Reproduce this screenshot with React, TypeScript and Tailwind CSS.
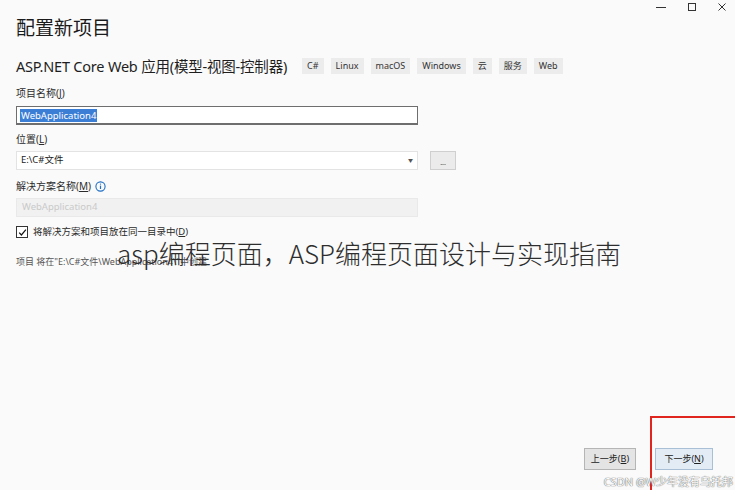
const tags = ["C#", "Linux", "macOS", "Windows", "云", "服务", "Web"];

function WindowControls() {
  return (
    <div className="absolute right-0 top-0 flex items-center gap-[20px] pr-[8px] pt-[2px] text-[#333]">
      <svg width="12" height="10" viewBox="0 0 12 10">
        <line x1="1" y1="5.5" x2="11" y2="5.5" stroke="currentColor" strokeWidth="1" />
      </svg>
      <svg width="10" height="10" viewBox="0 0 10 10">
        <rect x="1.5" y="1.5" width="7" height="7" fill="none" stroke="currentColor" strokeWidth="1" />
      </svg>
      <svg width="10" height="10" viewBox="0 0 10 10">
        <path d="M1.5 1.5 L8.5 8.5 M8.5 1.5 L1.5 8.5" stroke="currentColor" strokeWidth="1" />
      </svg>
    </div>
  );
}

function Label({ children }: { children: React.ReactNode }) {
  return <div className="text-[10px] leading-[14px] text-[#2b2b2b]">{children}</div>;
}

export default function App() {
  return (
    <div className="relative flex h-[490px] w-[735px] flex-col overflow-hidden bg-[#fafafa] font-['Noto_Sans','Noto_Sans_CJK_SC',sans-serif] text-[#1e1e1e]">
      <WindowControls />

      <div className="flex flex-col px-4 pt-[15px]">
        <h1 className="text-[19px] leading-[26px] text-[#1b1b1b]">配置新项目</h1>

        <div className="mt-[15px] flex items-center">
          <span className="text-[14.5px] leading-[20px] tracking-[-0.2px]">
            ASP.NET Core Web 应用(模型-视图-控制器)
          </span>
          <div className="ml-[15px] flex gap-[7px]">
            {tags.map((t) => (
              <span
                key={t}
                className="flex h-[16px] items-center bg-[#ececec] px-[5px] text-[9px] text-[#333]"
              >
                {t}
              </span>
            ))}
          </div>
        </div>

        <div className="mt-[10px]">
          <Label>
            项目名称(<span className="underline">J</span>)
          </Label>
        </div>
        <div className="mt-[6px] flex h-[19px] w-[402px] items-center border border-b-2 border-[#6e6e6e] bg-white pl-[3px]">
          <span className="bg-[#3b7ed6] px-[1px] text-[9.5px] leading-[13px] text-white">WebApplication4</span>
        </div>

        <div className="mt-[7px]">
          <Label>
            位置(<span className="underline">L</span>)
          </Label>
        </div>
        <div className="mt-[5px] flex items-center gap-[12px]">
          <div className="flex h-[19px] w-[402px] items-center justify-between border border-[#e3e3e3] bg-white pl-[4px] pr-[4px]">
            <span className="text-[9.5px] text-[#222]">E:\C#文件</span>
            <span className="text-[5px] text-[#555]">▼</span>
          </div>
          <div className="flex h-[19px] w-[26px] items-end justify-center border border-[#cfcfcf] bg-[#ebebeb] pb-[3px] text-[7px] leading-[7px] text-[#444]">
            ...
          </div>
        </div>

        <div className="mt-[9px] flex items-center gap-[4px]">
          <Label>
            解决方案名称(<span className="underline">M</span>)
          </Label>
          <svg width="11" height="11" viewBox="0 0 11 11">
            <circle cx="5.5" cy="5.5" r="4.6" fill="none" stroke="#1f6fc5" strokeWidth="1.1" />
            <line x1="5.5" y1="4.6" x2="5.5" y2="8" stroke="#1f6fc5" strokeWidth="1.2" />
            <circle cx="5.5" cy="3.1" r="0.7" fill="#1f6fc5" />
          </svg>
        </div>
        <div className="mt-[5px] flex h-[19px] w-[402px] items-center border border-[#e9e9e9] bg-[#f1f1f1] pl-[5px]">
          <span className="text-[9.5px] text-[#c9c9c9]">WebApplication4</span>
        </div>

        <div className="mt-[8px] flex items-center gap-[5px]">
          <div className="flex h-[12px] w-[12px] items-center justify-center border border-[#333] bg-white">
            <svg width="9" height="9" viewBox="0 0 9 9">
              <path d="M1.2 4.6 L3.4 7 L7.9 1.6" fill="none" stroke="#111" strokeWidth="1.2" />
            </svg>
          </div>
          <span className="text-[9.5px] text-[#2b2b2b]">
            将解决方案和项目放在同一目录中(<span className="underline">D</span>)
          </span>
        </div>

        <div className="mt-[16px] text-[9px] text-[#555]">项目 将在"E:\C#文件\WebApplication4\"中创建</div>
      </div>

      <div className="absolute left-[117px] top-[235px] whitespace-nowrap font-['Noto_Sans_CJK_SC',sans-serif] text-[26px] font-light leading-[35px] text-[#2e2e2e]">
        asp编程页面，ASP编程页面设计与实现指南
      </div>

      <div className="mt-auto flex justify-end gap-[19px] pb-[20px] pr-[22px]">
        <button className="flex h-[22px] w-[52px] items-center justify-center border border-[#b5b5b5] bg-[#e4e4e4] text-[9px] text-[#222]">
          上一步(<span className="underline">B</span>)
        </button>
        <button className="flex h-[22px] w-[58px] items-center justify-center border border-[#a9bfd6] bg-[#e3ecf5] text-[9px] text-[#222]">
          下一步(<span className="underline">N</span>)
        </button>
      </div>

      <div className="absolute left-[650px] top-[416px] h-[90px] w-[100px] border-2 border-[#e0251f]" />

      <div className="absolute bottom-[1px] right-[2px] text-[11px] leading-[14px] text-white [text-shadow:0_0_1px_#666,0_0_1px_#666]">
        CSDN @W少年没有乌托邦
      </div>
    </div>
  );
}
